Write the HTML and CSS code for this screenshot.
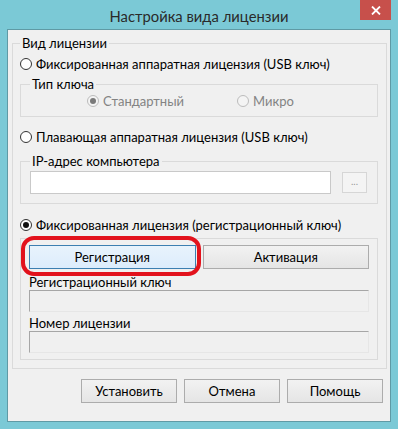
FILE: index.html
```html
<!DOCTYPE html>
<html lang="ru">
<head>
<meta charset="UTF-8">
<meta name="viewport" content="width=device-width, initial-scale=1.0">
<link rel="stylesheet" href="styles.css">
<title>Настройка вида лицензии</title>
</head>
<body>
<div class="window">
  <div class="titlebar">
    <span></span>
    <div class="title">Настройка вида лицензии</div>
    <div class="close">
      <svg width="10" height="9" viewBox="0 0 10 9"><path d="M1 0.5 L9 8.5 M9 0.5 L1 8.5" stroke="#fff" stroke-width="1.8"/></svg>
    </div>
  </div>

  <div class="client">
    <fieldset class="group outer">
      <legend>Вид лицензии</legend>

      <label class="radio first"><span class="circle"></span>Фиксированная аппаратная лицензия (USB ключ)</label>

      <fieldset class="group sub keytype">
        <legend>Тип ключа</legend>
        <div class="choices">
          <label class="radio disabled checked"><span class="circle"></span>Стандартный</label>
          <label class="radio disabled"><span class="circle"></span>Микро</label>
        </div>
      </fieldset>

      <label class="radio second"><span class="circle"></span>Плавающая аппаратная лицензия (USB ключ)</label>

      <fieldset class="group sub ip">
        <legend>IP-адрес компьютера</legend>
        <div class="ip-row">
          <div class="textbox"></div>
          <div class="browse">...</div>
        </div>
      </fieldset>

      <label class="radio third checked"><span class="circle"></span>Фиксированная лицензия (регистрационный ключ)</label>

      <div class="group sub reg">
        <div class="tabs">
          <div class="btn tab active">Регистрация</div>
          <div class="btn tab">Активация</div>
          <div class="mark"></div>
        </div>
        <div class="field-label">Регистрационный ключ</div>
        <div class="textbox off"></div>
        <div class="field-label second-label">Номер лицензии</div>
        <div class="textbox off"></div>
      </div>
    </fieldset>

    <div class="buttons">
      <div class="btn">Установить</div>
      <div class="btn">Отмена</div>
      <div class="btn">Помощь</div>
    </div>
  </div>
</div>
</body>
</html>
```

FILE: styles.css
```css
* {
  box-sizing: border-box;
}

body {
  margin: 0;
  font-family: Lato, "Noto Sans", sans-serif;
  font-size: 13px;
  color: #000;
  background: #7bc9d6;
}

.window {
  width: 398px;
  height: 429px;
  background: #7bc9d6;
}

.titlebar {
  height: 29px;
  display: grid;
  grid-template-columns: 1fr auto 1fr;
  align-items: start;
}

.title {
  font-size: 14.8px;
  line-height: 20px;
  padding-top: 6px;
  color: #2a2a2a;
}

.close {
  justify-self: end;
  margin-right: 7px;
  width: 31px;
  height: 20px;
  background: #c7504b;
  display: flex;
  align-items: center;
  justify-content: center;
}

.client {
  margin: 0 7px;
  height: 393px;
  background: #f0f0f0;
  border: 1px solid #5f9aa5;
  padding-top: 5px;
}

/* group boxes */
.group {
  margin: 0;
  border: 1px solid #dadada;
  min-width: 0;
}

.group legend {
  padding: 0 2px;
  line-height: 16px;
}

.outer {
  margin: 0 3px 0 4px;
  padding: 0 8px 8px 7px;
}

.sub {
  padding: 0 10px 0 9px;
}

/* radios */
.radio {
  display: flex;
  align-items: center;
  gap: 4px;
  height: 16px;
  line-height: 16px;
  white-space: nowrap;
}

.circle {
  width: 12px;
  height: 12px;
  border: 1px solid #333;
  border-radius: 50%;
  background: #fff;
  display: flex;
  align-items: center;
  justify-content: center;
  flex: none;
}

.checked .circle::after {
  content: "";
  width: 6px;
  height: 6px;
  border-radius: 50%;
  background: #111;
}

.radio.disabled {
  color: #838383;
}

.disabled .circle {
  border-color: #bcbcbc;
  background: #f4f4f4;
}

.disabled.checked .circle::after {
  background: #7a7a7a;
}

.first {
  margin-top: 5px;
}

.keytype {
  margin-top: 4px;
  padding-bottom: 7px;
}

.choices {
  display: grid;
  grid-template-columns: 150px auto;
  padding-left: 57px;
  margin-top: 1px;
}

.second {
  margin-top: 12px;
}

.ip {
  margin-top: 8px;
  padding-bottom: 9px;
}

.ip-row {
  display: flex;
  align-items: center;
  gap: 11px;
  margin-top: 2px;
}

.textbox {
  height: 23px;
  flex: 1;
  background: #fff;
  border: 1px solid #c9c9c9;
}

.browse {
  width: 25px;
  height: 21px;
  border: 1px solid #d6d6d6;
  background: #f4f4f4;
  color: #9a9a9a;
  font-size: 10px;
  line-height: 17px;
  text-align: center;
}

.third {
  margin-top: 13px;
}

.reg {
  margin-top: 5px;
  padding: 6px 8px 6px 8px;
}

.tabs {
  position: relative;
  display: grid;
  grid-template-columns: 1fr 1fr;
  gap: 7px;
}

.btn {
  height: 24px;
  line-height: 22px;
  text-align: center;
  border: 1px solid #acacac;
  background: linear-gradient(#f2f2f2, #e5e5e5);
}

.tab.active {
  border-color: #3c7fb1;
  background: linear-gradient(#e8f3fc, #dcecfc);
}

/* red annotation drawn over the tab */
.mark {
  position: absolute;
  left: -8px;
  top: -9px;
  width: 180px;
  height: 40px;
  border: 4px solid #e2121c;
  border-radius: 13px;
}

.field-label {
  line-height: 16px;
  margin-top: 5px;
}

.second-label {
  margin-top: 3px;
}

.textbox.off {
  height: 22px;
  background: #f0f0f0;
  border-color: #a6a6a6 #e6e6e6 #e6e6e6 #a6a6a6;
}

.buttons {
  display: flex;
  justify-content: flex-end;
  gap: 7px;
  padding-right: 7px;
  margin-top: 10px;
}

.buttons .btn {
  width: 96px;
}
```
